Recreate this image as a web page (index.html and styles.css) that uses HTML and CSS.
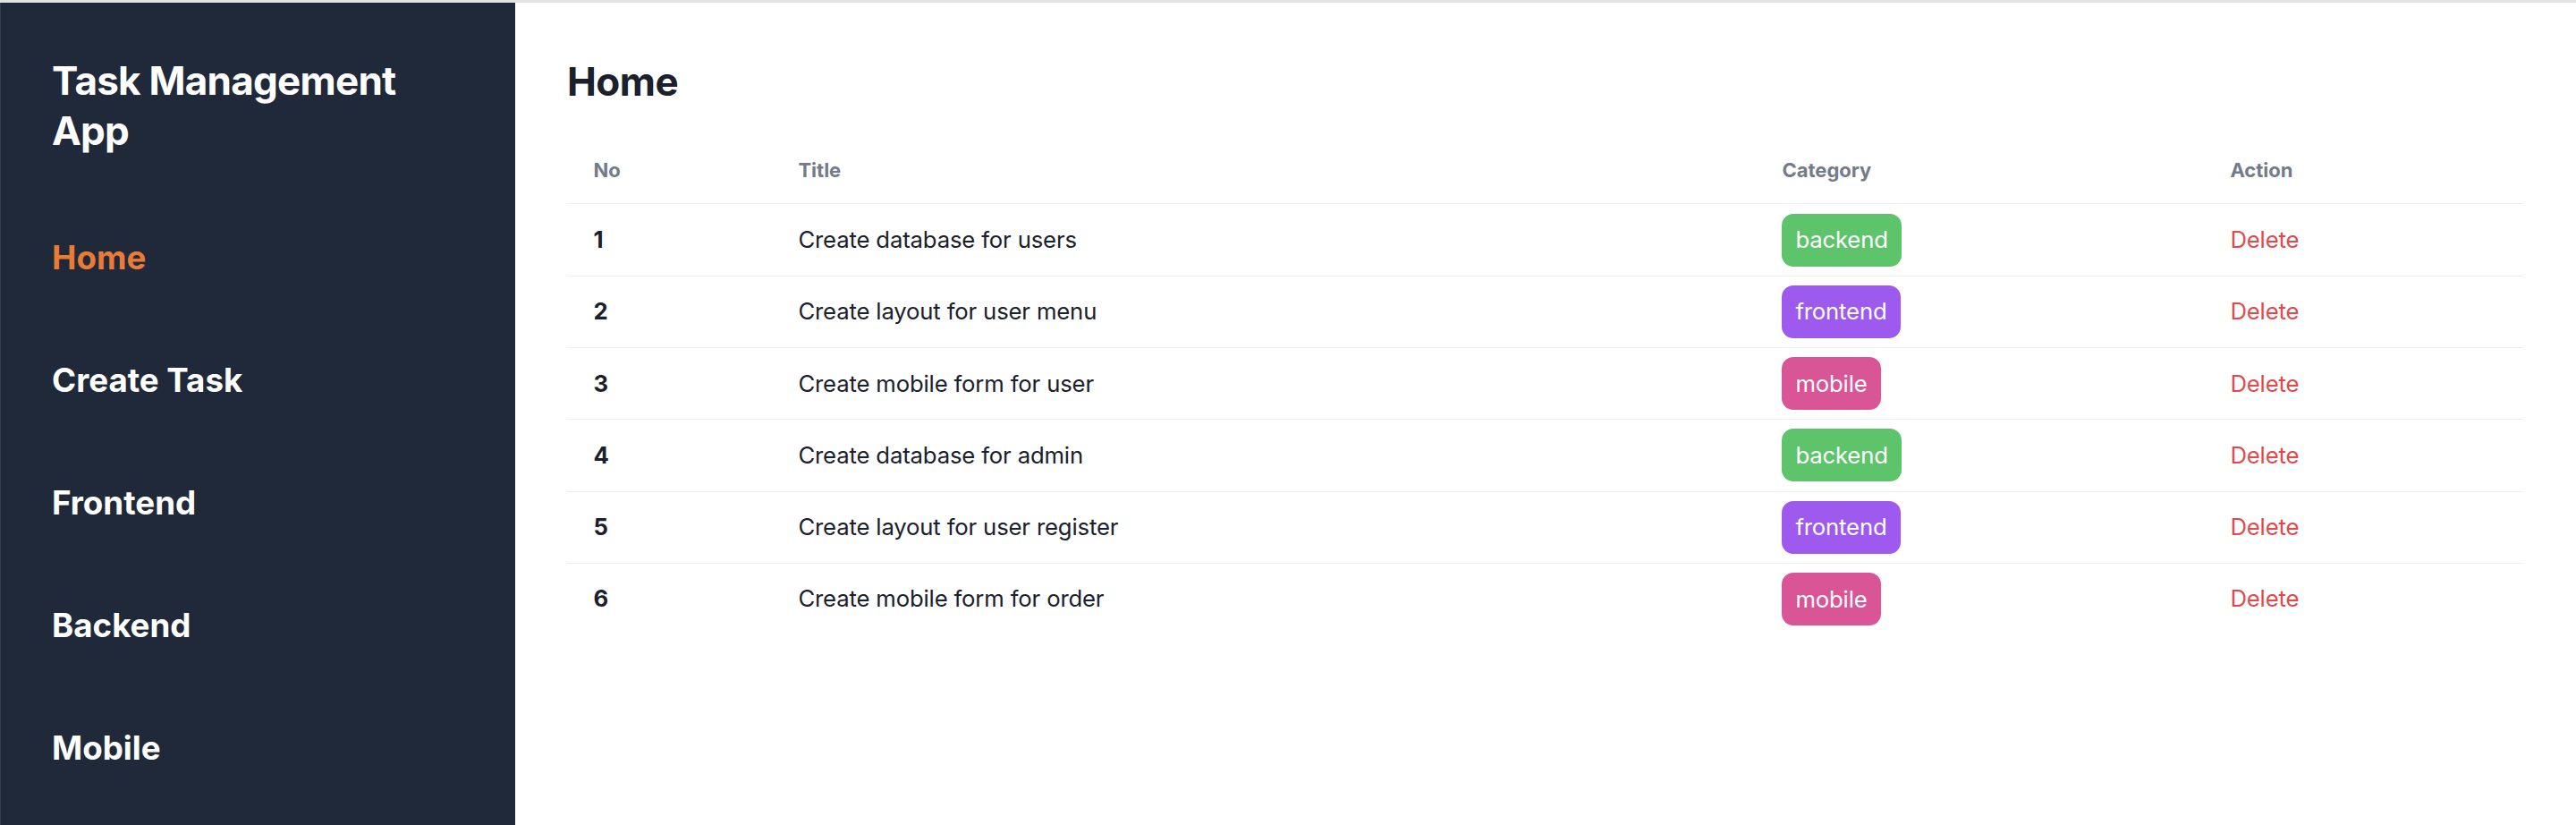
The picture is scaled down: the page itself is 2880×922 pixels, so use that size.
FILE: index.html
```html
<!DOCTYPE html>
<html lang="en">
<head>
<meta charset="utf-8">
<title>Task Management App</title>
<link rel="stylesheet" href="styles.css">
</head>
<body>
<div class="topline"></div>
<div class="app">
  <aside class="sidebar">
    <h1 class="brand">Task Management App</h1>
    <nav class="nav">
      <a class="nav-item active" href="#">Home</a>
      <a class="nav-item" href="#">Create Task</a>
      <a class="nav-item" href="#">Frontend</a>
      <a class="nav-item" href="#">Backend</a>
      <a class="nav-item" href="#">Mobile</a>
    </nav>
  </aside>
  <main class="main">
    <h2 class="page-title">Home</h2>
    <table class="tasks">
      <thead>
        <tr>
          <th class="c-no">No</th>
          <th class="c-title">Title</th>
          <th class="c-cat">Category</th>
          <th class="c-act">Action</th>
        </tr>
      </thead>
      <tbody>
        <tr>
          <td class="num">1</td>
          <td>Create database for users</td>
          <td><span class="badge backend">backend</span></td>
          <td><a class="delete" href="#">Delete</a></td>
        </tr>
        <tr>
          <td class="num">2</td>
          <td>Create layout for user menu</td>
          <td><span class="badge frontend">frontend</span></td>
          <td><a class="delete" href="#">Delete</a></td>
        </tr>
        <tr>
          <td class="num">3</td>
          <td>Create mobile form for user</td>
          <td><span class="badge mobile">mobile</span></td>
          <td><a class="delete" href="#">Delete</a></td>
        </tr>
        <tr>
          <td class="num">4</td>
          <td>Create database for admin</td>
          <td><span class="badge backend">backend</span></td>
          <td><a class="delete" href="#">Delete</a></td>
        </tr>
        <tr>
          <td class="num">5</td>
          <td>Create layout for user register</td>
          <td><span class="badge frontend">frontend</span></td>
          <td><a class="delete" href="#">Delete</a></td>
        </tr>
        <tr>
          <td class="num">6</td>
          <td>Create mobile form for order</td>
          <td><span class="badge mobile">mobile</span></td>
          <td><a class="delete" href="#">Delete</a></td>
        </tr>
      </tbody>
    </table>
  </main>
</div>
</body>
</html>
```
FILE: styles.css
```css
* { box-sizing: border-box; }

html, body {
  margin: 0;
  padding: 0;
  height: 100%;
  background: #ffffff;
  font-family: Inter, "Noto Sans", "Liberation Sans", sans-serif;
  color: #1a202c;
}

.topline {
  height: 3px;
  background: #e3e3e3;
}

.app {
  display: flex;
  min-height: calc(100vh - 3px);
}

.sidebar {
  width: 20%;
  flex: 0 0 20%;
  background: #1f293a;
  border-left: 1px solid #333d4d;
  padding: 59px 56px 40px 57px;
  display: flex;
  flex-direction: column;
}

.brand {
  margin: 0 0 92px 0;
  font-size: 44px;
  line-height: 56px;
  font-weight: 700;
  letter-spacing: -0.017em;
  color: #ffffff;
}

.nav {
  display: flex;
  flex-direction: column;
  gap: 93px;
}

.nav-item {
  display: block;
  font-size: 36.7px;
  line-height: 44px;
  font-weight: 700;
  color: #ffffff;
  text-decoration: none;
}

.nav-item.active {
  color: #ea7b36;
}

.main {
  flex: 1;
  padding: 60px 59px 40px 58px;
}

.page-title {
  margin: 0 0 35px 0;
  font-size: 44px;
  line-height: 56px;
  font-weight: 700;
  letter-spacing: -0.012em;
  color: #1a202c;
}

.tasks {
  width: 100%;
  border-collapse: collapse;
  table-layout: fixed;
}

.tasks th {
  text-align: left;
  font-size: 22px;
  line-height: 29.4px;
  font-weight: 700;
  color: #737b89;
  letter-spacing: 0;
  padding: 22px 29.4px;
  border-bottom: 1px solid #edf0f3;
}

.c-no { width: 229px; }
.c-title { width: 1100px; }
.c-cat { width: 501px; }
.c-act { width: auto; }

.tasks td {
  font-size: 25.7px;
  line-height: 32px;
  letter-spacing: -0.006em;
  padding: 10.15px 29.4px;
  vertical-align: middle;
  height: 79.3px;
  border-bottom: 1px solid #edf0f3;
  color: #1a202c;
}

.tasks tbody tr:last-child td {
  border-bottom: none;
}

.tasks td.num {
  font-weight: 700;
}

.badge {
  display: inline-flex;
  align-items: center;
  height: 59px;
  padding: 0 15px;
  border-radius: 13px;
  color: #ffffff;
  font-size: 25.7px;
  line-height: 1;
}

.badge.backend { background: #5ec46b; }
.badge.frontend { background: #9e59ee; }
.badge.mobile { background: #da5596; }

.delete {
  color: #e04a4a;
  text-decoration: none;
}
```
